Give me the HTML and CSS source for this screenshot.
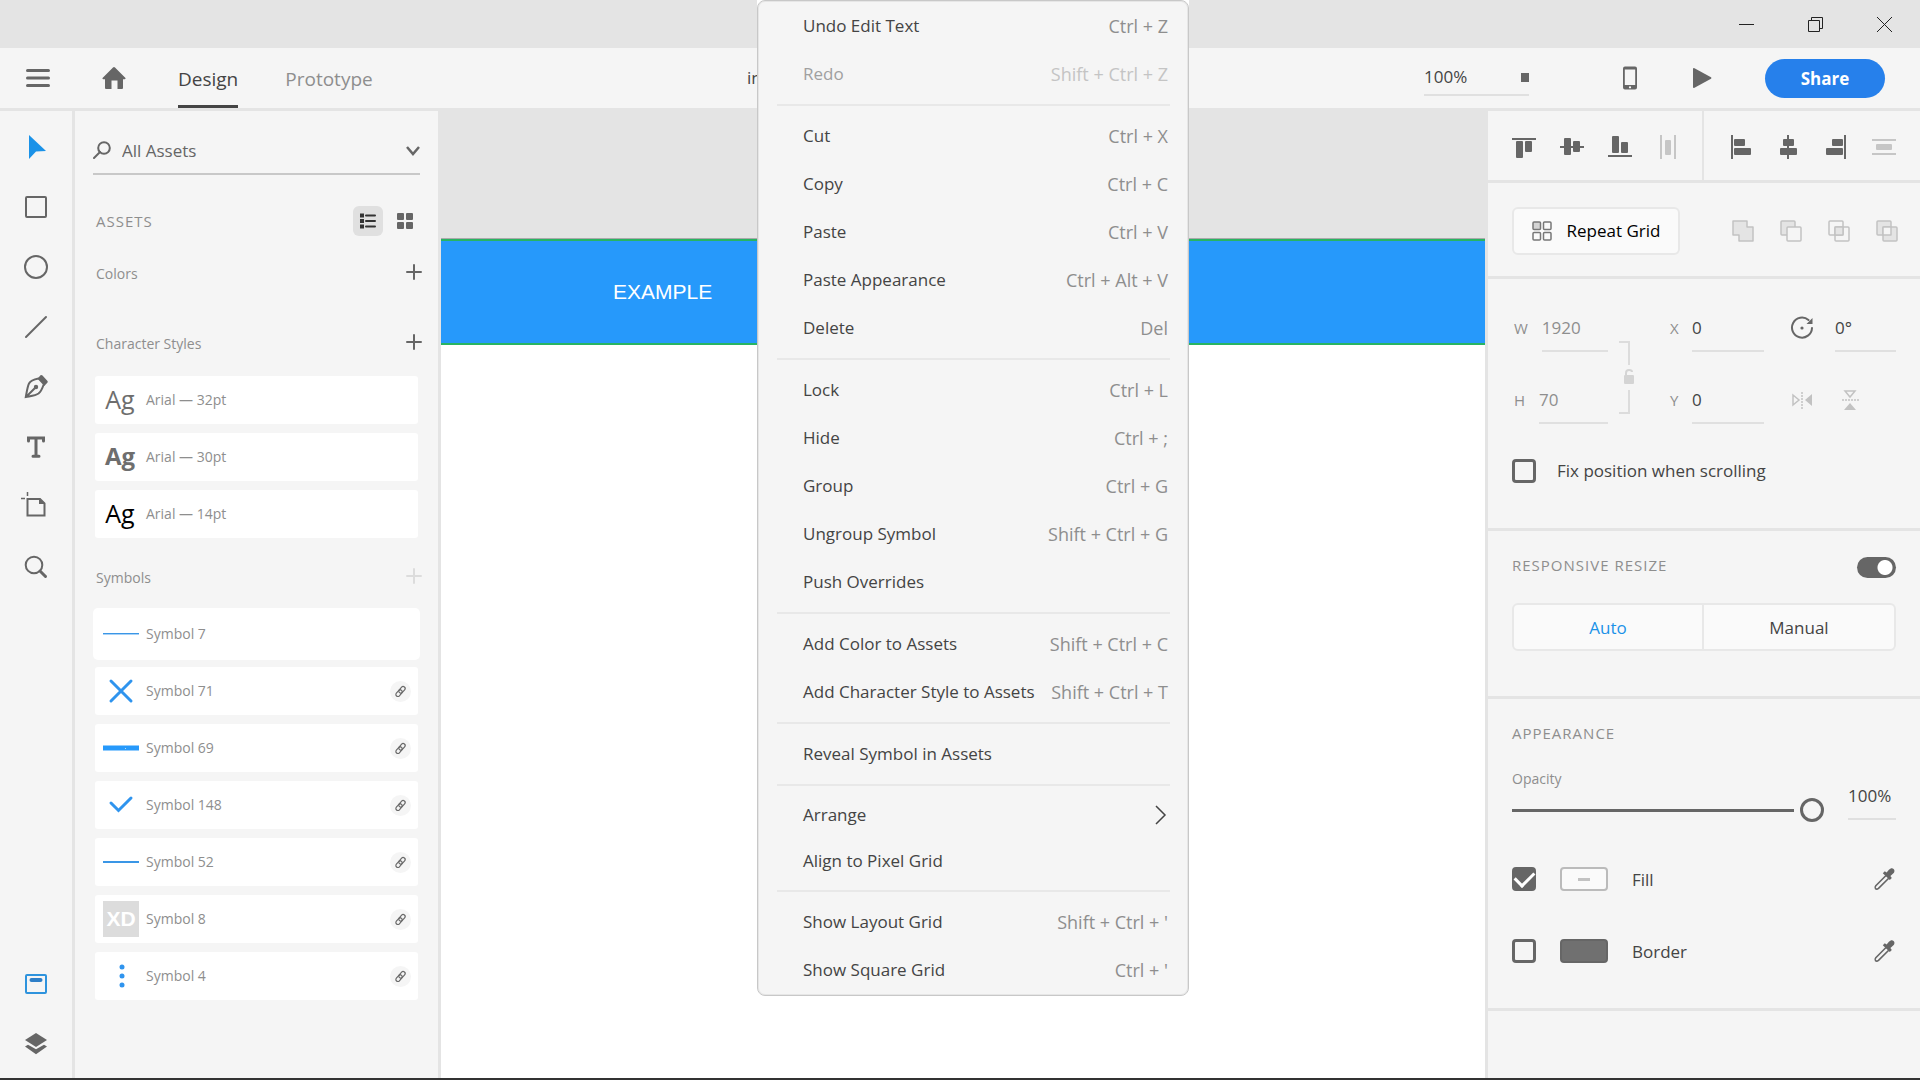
FILE: index.html
```html
<!DOCTYPE html>
<html lang="en">
<head>
<meta charset="utf-8">
<title>Design</title>
<link rel="stylesheet" href="styles.css">
</head>
<body>
<svg class="sprite" aria-hidden="true">
  <symbol id="plus" viewBox="0 0 16 16"><path d="M8 1v14M1 8h14" fill="none" stroke="currentColor" stroke-width="2" stroke-linecap="round"/></symbol>
  <symbol id="link" viewBox="0 0 21 21"><circle cx="10.500" cy="10.500" r="10.500" fill="#f5f5f5"/><g fill="none" stroke="#6a6a6a" stroke-width="1.200" transform="rotate(-49 10.500 10.500)"><rect x="4.500" y="8.500" width="7.500" height="4" rx="2"/><rect x="9" y="8.500" width="7.500" height="4" rx="2"/></g></symbol>
  <symbol id="dropper" viewBox="0 0 24 24"><path d="M14 8.500 3.800 18.700c-.8 1-1 2.200-.3 3 .8.700 2 .5 3-.3L16.700 11.200" fill="none" stroke="#666" stroke-width="1.600"/><path d="m10.800 6.300 2-2 1.800 1.300 2.300-2.800c1.600-1.900 3.600-2 4.700-.9 1.300 1.300 1.200 3.300-.7 4.900l-2.500 2.300 1.400 2-2 2z" fill="#666"/></symbol>
</svg>
<div class="app">
  <div class="titlebar">
    <button aria-label="Minimize"><svg width="15" height="15"><path d="M0 7.500h15" stroke="#222"/></svg></button>
    <button aria-label="Restore"><svg width="15" height="15" fill="none" stroke="#222"><path d="M.5 3.500h11v11H.5zM3.500 3.500v-3h11v11h-3"/></svg></button>
    <button aria-label="Close"><svg width="15" height="15"><path d="m0 0 15 15M15 0 0 15" stroke="#222"/></svg></button>
  </div>

  <header class="topbar">
    <nav class="nav">
      <button aria-label="Menu"><svg width="24" height="24"><path d="M1.500 4.500h21M1.500 12h21M1.500 19.500h21" stroke="#666" stroke-width="3" stroke-linecap="round"/></svg></button>
      <button aria-label="Home"><svg width="24" height="24"><path d="M11 1.500q1-1 2 0L23.500 12q.5 1-.8 1.200H21V22q0 1-1 1h-4.500v-8.500h-6V23H4q-1 0-1-1v-8.800H1.300Q0 13 .5 12z" fill="#666"/></svg></button>
      <a href="#" class="tab active">Design</a>
      <a href="#" class="tab">Prototype</a>
    </nav>
    <span class="doc">in</span>
    <div class="actions">
      <label class="zoom"><input value="100%" aria-label="Zoom level"><span class="handle"></span></label>
      <button aria-label="Device preview"><svg width="24" height="24"><path d="M7 .5h10q2 0 2 2v19q0 2-2 2H7q-2 0-2-2v-19q0-2 2-2zM6.800 3.500v15.500h10.400V3.500z" fill="#666" fill-rule="evenodd"/><circle cx="12" cy="21.300" r="1.100" fill="#fff"/></svg></button>
      <button aria-label="Play"><svg width="24" height="24"><path d="M3 3q0-1.500 1.500-.8L21 11.200q1 .8 0 1.600L4.500 21.800Q3 22.500 3 21z" fill="#666"/></svg></button>
      <button class="share">Share</button>
    </div>
  </header>

  <main class="workspace">
    <aside class="tools">
      <button aria-label="Select"><svg width="24" height="24"><path d="M5 0 22 16l-10 .5L5 24z" fill="#1a92e8"/></svg></button>
      <button aria-label="Rectangle"><svg width="24" height="24"><rect x="2" y="2" width="20" height="20" rx="1" class="line"/></svg></button>
      <button aria-label="Ellipse"><svg width="24" height="24"><circle cx="12" cy="12" r="11" class="line"/></svg></button>
      <button aria-label="Line"><svg width="24" height="24"><path d="M2 22 22 2" class="line"/></svg></button>
      <button aria-label="Pen"><svg width="24" height="24"><path d="M14.500 3.500C9 4.500 6 6.500 5 8.500c-1.500 3-2.200 8-3.200 13.500 5-1 10-1.500 12.700-3.500 2.500-2 4-5.500 5-8.500M2 22l9-9" class="line"/><path d="M16.500.2q1-.5 2 .3l5 5.500q.5 1 0 1.500L20.300 11 13.500 3.800z" fill="#666"/><circle cx="12" cy="12" r="2.200" fill="#666"/></svg></button>
      <button aria-label="Text"><svg width="24" height="24"><path d="M4.500 6V3h15v3M12 3v18M9 21.200h6" fill="none" stroke="#666" stroke-width="3" stroke-linecap="round"/></svg></button>
      <button aria-label="Artboard"><svg width="32" height="30"><path d="M7.500 7H20l4.500 4.500V23.500h-17z" class="line"/><path d="M7.500 0v4M1 6.500h4" stroke="#666" stroke-width="1.500"/><path d="M19 6v6h6z" fill="#666"/></svg></button>
      <button aria-label="Zoom"><svg width="24" height="24"><circle cx="10" cy="10" r="8.300" class="line"/><path d="m16 16 5.500 5.500" stroke="#666" stroke-width="3" stroke-linecap="round"/></svg></button>
      <button class="first-bottom" aria-label="Assets"><svg width="24" height="24"><rect x="2" y="3" width="20" height="18" rx="1" fill="none" stroke="#2e93dd" stroke-width="2"/><path d="M7.500 8h9" stroke="#2e7fc8" stroke-width="4" stroke-linecap="round"/></svg></button>
      <button aria-label="Layers"><svg width="24" height="24"><path d="M12 1 23 8l-11 7L1 8z" fill="#666"/><path d="m1 14.500 3-1.700 8 4.500 8-4.500 3 1.700-11 7.700z" fill="#666"/></svg></button>
    </aside>

    <aside class="assets">
      <label class="search">
        <svg width="18" height="18"><circle cx="11" cy="7" r="5.800" class="line"/><path d="m7 11-6 6" class="line"/></svg>
        <input value="All Assets" aria-label="Filter assets">
        <svg width="14" height="18"><path d="m1 6 6 7 6-7" fill="none" stroke="#666" stroke-width="2.500"/></svg>
      </label>
      <div class="assets-head">
        <h2>ASSETS</h2>
        <button class="on" aria-label="List view"><svg width="16" height="16"><path d="M0 2.500h4M0 8h4M0 13.500h4" stroke="#333" stroke-width="4"/><path d="M6 2.500h9M6 8h9M6 13.500h9" stroke="#333" stroke-width="2" stroke-linecap="round"/></svg></button>
        <button aria-label="Grid view"><svg width="16" height="16" fill="#666"><rect width="7" height="7" rx="1"/><rect x="9" width="7" height="7" rx="1"/><rect y="9" width="7" height="7" rx="1"/><rect x="9" y="9" width="7" height="7" rx="1"/></svg></button>
      </div>
      <div class="group-head colors"><h3>Colors</h3><button aria-label="Add color"><svg width="16" height="16"><use href="#plus"/></svg></button></div>
      <div class="group-head styles"><h3>Character Styles</h3><button aria-label="Add character style"><svg width="16" height="16"><use href="#plus"/></svg></button></div>
      <ul class="cards">
        <li><span class="ag">Ag</span>Arial — 32pt</li>
        <li><span class="ag bold">Ag</span>Arial — 30pt</li>
        <li><span class="ag black">Ag</span>Arial — 14pt</li>
      </ul>
      <div class="group-head symbols"><h3>Symbols</h3><button disabled aria-label="Add symbol"><svg width="16" height="16"><use href="#plus"/></svg></button></div>
      <ul class="cards">
        <li class="selected"><svg width="36" height="36"><path d="M0 17.500h36" stroke="#3a96e6"/><path d="M0 18.500h36" stroke="#a8d2f7"/></svg>Symbol 7</li>
        <li><svg width="36" height="36"><path d="m8 8 20 20M28 8 8 28" stroke="#2f94ee" stroke-width="3" stroke-linecap="round"/></svg>Symbol 71<svg class="chain" width="21" height="21"><use href="#link"/></svg></li>
        <li><svg width="36" height="36"><path d="M0 18h36" stroke="#2699fb" stroke-width="5"/><path d="M22 18.500h1" stroke="#bde"/></svg>Symbol 69<svg class="chain" width="21" height="21"><use href="#link"/></svg></li>
        <li><svg width="36" height="36"><path d="m8 16 7.500 7.500L28 11" fill="none" stroke="#2f94ee" stroke-width="3" stroke-linecap="round"/></svg>Symbol 148<svg class="chain" width="21" height="21"><use href="#link"/></svg></li>
        <li><svg width="36" height="36"><path d="M0 18h36" stroke="#3a96e6" stroke-width="2"/></svg>Symbol 52<svg class="chain" width="21" height="21"><use href="#link"/></svg></li>
        <li><span class="xd">XD</span>Symbol 8<svg class="chain" width="21" height="21"><use href="#link"/></svg></li>
        <li><svg width="36" height="36" fill="#2f94ee"><circle cx="19" cy="9" r="2.500"/><circle cx="19" cy="18" r="2.500"/><circle cx="19" cy="27" r="2.500"/></svg>Symbol 4<svg class="chain" width="21" height="21"><use href="#link"/></svg></li>
      </ul>
    </aside>

    <section class="canvas">
      <div class="artboard"><div class="banner">EXAMPLE</div></div>
    </section>

    <aside class="props">
      <div class="align">
        <div class="align-set">
          <button aria-label="Align top"><svg width="24" height="24" fill="#666"><path d="M0 3h24v2H0z"/><rect x="4" y="6" width="7" height="17" rx="1"/><rect x="13" y="6" width="7" height="11" rx="1"/></svg></button>
          <button aria-label="Align middle"><svg width="24" height="24" fill="#666"><path d="M0 11h24v2H0z"/><rect x="4" y="3" width="7" height="17" rx="1"/><rect x="13" y="6" width="7" height="11" rx="1"/></svg></button>
          <button aria-label="Align bottom"><svg width="24" height="24" fill="#666"><path d="M0 20h24v2H0z"/><rect x="4" y="1" width="7" height="17" rx="1"/><rect x="13" y="7" width="7" height="11" rx="1"/></svg></button>
          <button disabled aria-label="Distribute horizontally"><svg width="24" height="24" fill="#c6c6c6"><path d="M4 0h2v24H4zM18 0h2v24h-2z"/><rect x="9" y="5" width="6" height="15" rx="1"/></svg></button>
        </div>
        <div class="align-set">
          <button aria-label="Align left"><svg width="24" height="24" fill="#666"><path d="M3 0h2v24H3z"/><rect x="6" y="4" width="11" height="7" rx="1"/><rect x="6" y="13" width="17" height="7" rx="1"/></svg></button>
          <button aria-label="Align center"><svg width="24" height="24" fill="#666"><path d="M11 0h2v24h-2z"/><rect x="7" y="4" width="11" height="7" rx="1"/><rect x="4" y="13" width="17" height="7" rx="1"/></svg></button>
          <button aria-label="Align right"><svg width="24" height="24" fill="#666"><path d="M20 0h2v24h-2z"/><rect x="8" y="4" width="11" height="7" rx="1"/><rect x="2" y="13" width="17" height="7" rx="1"/></svg></button>
          <button disabled aria-label="Distribute vertically"><svg width="24" height="24" fill="#c6c6c6"><path d="M0 4h24v2H0zM0 18h24v2H0z"/><rect x="4" y="9" width="16" height="6" rx="1"/></svg></button>
        </div>
      </div>

      <div class="repeat">
        <button class="repeat-btn"><svg width="20" height="20" fill="none" stroke="#777" stroke-width="1.500"><rect x="1" y="1" width="7.500" height="7.500" rx="1" fill="#d4d4d4"/><rect x="11.500" y="1" width="7.500" height="7.500" rx="1"/><rect x="1" y="11.500" width="7.500" height="7.500" rx="1"/><rect x="11.500" y="11.500" width="7.500" height="7.500" rx="1"/></svg>Repeat Grid</button>
        <div class="bool">
          <button disabled aria-label="Add"><svg width="24" height="24"><path d="M2 2h14v6h6v14H8v-6H2z" class="shape tint"/></svg></button>
          <button disabled aria-label="Subtract"><svg width="24" height="24"><rect x="2" y="2" width="14" height="14" rx="1" class="shape tint"/><rect x="8" y="8" width="14" height="14" rx="1" class="shape pale"/></svg></button>
          <button disabled aria-label="Intersect"><svg width="24" height="24"><rect x="2" y="2" width="14" height="14" rx="1" class="shape"/><rect x="8" y="8" width="14" height="14" rx="1" class="shape"/><path d="M8 8h8v8H8z" class="shape tint"/></svg></button>
          <button disabled aria-label="Exclude overlap"><svg width="24" height="24"><rect x="2" y="2" width="14" height="14" rx="1" class="shape tint"/><rect x="8" y="8" width="14" height="14" rx="1" class="shape tint"/><path d="M8 8h8v8H8z" class="shape pale"/></svg></button>
        </div>
      </div>

      <div class="transform">
        <div class="geometry">
          <label class="field dim">W<input value="1920"></label>
          <svg class="lock" width="16" height="76"><path d="M0 2h10v23M10 50v23H0" fill="none" stroke="#dcdcdc" stroke-width="2"/><rect x="5" y="35" width="10" height="9" rx="1" fill="#d4d4d4"/><path d="M7 36v-3q0-3 3-3t3 2" fill="none" stroke="#d4d4d4" stroke-width="2"/></svg>
          <label class="field pos">X<input value="0"></label>
          <label class="rotate"><svg width="24" height="24"><path d="M18.500 4A10 10 0 1 0 22 12" class="line"/><path d="M22.500 2v6h-6z" fill="#666"/><circle cx="12" cy="12" r="1.600" fill="#666"/></svg><input value="0°" aria-label="Rotation"></label>
          <label class="field dim">H<input value="70"></label>
          <label class="field pos">Y<input value="0"></label>
          <div class="flips">
            <button disabled aria-label="Flip horizontally"><svg width="24" height="24"><path d="M3 7v10l6-5z" fill="none" stroke="#c2c2c2" stroke-width="1.500"/><path d="M12 4v17" stroke="#c2c2c2" stroke-width="1.500" stroke-dasharray="2 1"/><path d="M22 6v12l-7-6z" fill="#c2c2c2"/></svg></button>
            <button disabled aria-label="Flip vertically"><svg width="24" height="24"><path d="M7 3h10l-5 6z" fill="none" stroke="#c2c2c2" stroke-width="1.500"/><path d="M4 12h17" stroke="#c2c2c2" stroke-width="1.500" stroke-dasharray="2 1"/><path d="M6 22h12l-6-7z" fill="#c2c2c2"/></svg></button>
          </div>
        </div>
        <label class="fix"><input type="checkbox">Fix position when scrolling</label>
      </div>

      <div class="responsive">
        <div class="props-head"><h2>RESPONSIVE RESIZE</h2><input type="checkbox" class="switch" checked aria-label="Responsive resize"></div>
        <div class="segments"><button class="on">Auto</button><button>Manual</button></div>
      </div>

      <div class="appearance">
        <h2>APPEARANCE</h2>
        <div class="opacity">
          <div class="slider"><label for="opacity">Opacity</label><input type="range" id="opacity" value="100"></div>
          <input class="amount" value="100%" aria-label="Opacity value">
        </div>
        <div class="paint">
          <input type="checkbox" id="fill" checked><span class="swatch empty"></span><label for="fill">Fill</label>
          <button aria-label="Pick fill color"><svg width="24" height="24"><use href="#dropper"/></svg></button>
        </div>
        <div class="paint">
          <input type="checkbox" id="border"><span class="swatch"></span><label for="border">Border</label>
          <button aria-label="Pick border color"><svg width="24" height="24"><use href="#dropper"/></svg></button>
        </div>
      </div>
    </aside>
  </main>
</div>

<div class="menu-backing">
  <div class="menu" role="menu">
    <button role="menuitem">Undo Edit Text<kbd>Ctrl + Z</kbd></button>
    <button role="menuitem" disabled>Redo<kbd>Shift + Ctrl + Z</kbd></button>
    <hr>
    <button role="menuitem">Cut<kbd>Ctrl + X</kbd></button>
    <button role="menuitem">Copy<kbd>Ctrl + C</kbd></button>
    <button role="menuitem">Paste<kbd>Ctrl + V</kbd></button>
    <button role="menuitem">Paste Appearance<kbd>Ctrl + Alt + V</kbd></button>
    <button role="menuitem">Delete<kbd>Del</kbd></button>
    <hr>
    <button role="menuitem">Lock<kbd>Ctrl + L</kbd></button>
    <button role="menuitem">Hide<kbd>Ctrl + ;</kbd></button>
    <button role="menuitem">Group<kbd>Ctrl + G</kbd></button>
    <button role="menuitem">Ungroup Symbol<kbd>Shift + Ctrl + G</kbd></button>
    <button role="menuitem">Push Overrides</button>
    <hr>
    <button role="menuitem">Add Color to Assets<kbd>Shift + Ctrl + C</kbd></button>
    <button role="menuitem">Add Character Style to Assets<kbd>Shift + Ctrl + T</kbd></button>
    <hr>
    <button role="menuitem">Reveal Symbol in Assets</button>
    <hr>
    <button role="menuitem" class="short">Arrange<svg width="14" height="20"><path d="m2 1 9 9-9 9" fill="none" stroke="#444" stroke-width="1.500"/></svg></button>
    <button role="menuitem" class="short">Align to Pixel Grid</button>
    <hr>
    <button role="menuitem">Show Layout Grid<kbd>Shift + Ctrl + '</kbd></button>
    <button role="menuitem">Show Square Grid<kbd>Ctrl + '</kbd></button>
  </div>
</div>
</body>
</html>
```
FILE: styles.css
```css
* { box-sizing: border-box; }

:root {
  --panel: #f5f5f5;
  --rule: #e4e4e4;
  --ink: #444;
  --muted: #8e8e8e;
  --icon: #666;
}

body {
  margin: 0;
  font-family: "Open Sans", "Noto Sans", sans-serif;
  font-size: 17px;
  line-height: 24px;
  color: var(--ink);
}

button, input {
  margin: 0;
  padding: 0;
  border: 0;
  border-radius: 0;
  background: none;
  font: inherit;
  color: inherit;
}

svg { display: block; flex: none; }
h2, h3 { margin: 0; font-weight: 400; color: var(--muted); }
h2 { font-size: 15px; line-height: 20px; letter-spacing: 1px; }
h3 { font-size: 14px; line-height: 20px; }
ul { margin: 0; padding: 0; list-style: none; }

.sprite { position: absolute; width: 0; height: 0; }
.line { fill: none; stroke: var(--icon); stroke-width: 2; stroke-linecap: round; }

.app {
  display: flex;
  flex-direction: column;
  min-height: 100vh;
  border-bottom: 2px solid #333;
}

/* Window bar */
.titlebar { display: flex; justify-content: flex-end; height: 48px; padding-right: 1px; background: var(--rule); }
.titlebar button { display: flex; justify-content: center; align-items: center; width: 69px; }

/* Top bar */
.topbar {
  display: grid;
  grid-template-columns: 747px 1fr auto;
  align-items: center;
  height: 63px;
  border-bottom: 3px solid var(--rule);
  background: var(--panel);
}
.nav { display: flex; align-items: center; gap: 52px; padding-left: 26px; height: 60px; }
.tab {
  display: flex;
  align-items: center;
  height: 60px;
  padding-top: 5px;
  border-bottom: 3px solid transparent;
  color: var(--muted);
  font-size: 19px;
  text-decoration: none;
}
.tab.active { color: var(--ink); border-color: var(--ink); }
.tab + .tab { margin-left: -5px; }
.actions { display: flex; align-items: center; padding-right: 35px; gap: 48px; }
.zoom {
  display: flex;
  align-items: center;
  width: 105px;
  height: 36px;
  margin-right: 41px;
  border-bottom: 2px solid #e0e0e0;
}
.zoom input { flex: 1; min-width: 0; }
.handle { width: 8px; height: 9px; background: var(--icon); }
.share {
  width: 120px;
  height: 39px;
  margin-left: 3px;
  padding-top: 2px;
  border-radius: 20px;
  background: #2680eb;
  color: #fff;
  font-weight: 700;
}

/* Workspace */
.workspace { flex: 1; display: grid; grid-template-columns: 75px 366px 1fr 435px; }

.tools {
  display: flex;
  flex-direction: column;
  padding: 6px 0 4px;
  border-right: 3px solid var(--rule);
  background: var(--panel);
}
.tools button { display: flex; justify-content: center; align-items: center; height: 60px; }
.tools .first-bottom { margin-top: auto; }

/* Assets */
.assets { padding: 16px 18px 0; border-right: 3px solid var(--rule); background: var(--panel); }
.search {
  display: flex;
  align-items: center;
  gap: 11px;
  height: 48px;
  border-bottom: 2px solid #c8c8c8;
  color: var(--icon);
}
.search input { flex: 1; min-width: 0; padding-top: 2px; }
.assets-head { display: flex; align-items: center; gap: 7px; margin-top: 31px; padding-left: 3px; }
.assets-head h2 { flex: 1; }
.assets-head button {
  display: flex;
  justify-content: center;
  align-items: center;
  width: 30px;
  height: 30px;
  border-radius: 6px;
}
.assets-head .on { background: #e0e0e0; }
.group-head {
  display: flex;
  justify-content: space-between;
  align-items: flex-start;
  height: 20px;
  padding-left: 3px;
  color: var(--icon);
}
.group-head button { margin-right: -2px; }
.group-head button:disabled { color: #dcdcdc; }
.colors { margin-top: 28px; }
.styles { margin-top: 50px; }
.symbols { margin-top: 30px; }
.cards { display: flex; flex-direction: column; gap: 9px; padding: 22px 2px 0; }
.cards li {
  display: flex;
  align-items: center;
  gap: 7px;
  height: 48px;
  padding: 0 7px 0 8px;
  border-radius: 3px;
  background: #fff;
  color: var(--muted);
  font-size: 14px;
}
.cards .selected { box-shadow: 0 0 0 2px #fff; }
.chain { margin-left: auto; }
.ag { width: 36px; padding: 0 2px 2px 0; text-align: center; font-size: 25px; color: #6e6e6e; }
.bold { font-weight: 700; font-size: 24px; }
.black { color: #000; }
.xd {
  width: 36px;
  background: #dcdcdc;
  color: #fff;
  font: 700 21px/36px "Liberation Sans", sans-serif;
  text-align: center;
}

/* Canvas */
.canvas { display: flex; padding-top: 127px; background: var(--rule); }
.artboard { flex: 1; border-top: 1px solid #aaa; background: #fff; }
.banner {
  display: flex;
  align-items: center;
  height: 106px;
  padding-left: 172px;
  border: solid #28b463;
  border-width: 2px 0;
  background: #2699fb;
  color: #fff;
  font: 21px "Liberation Sans", sans-serif;
}

/* Properties */
.props { border-left: 3px solid var(--rule); background: var(--panel); }
.props > div { border-bottom: 3px solid var(--rule); }
.align { display: grid; grid-template-columns: 1fr 1fr; height: 72px; }
.align-set { display: flex; align-items: center; gap: 24px; padding: 2px 0 0 24px; }
.align-set:first-child { border-right: 2px solid var(--rule); }
.repeat { display: flex; justify-content: space-between; align-items: center; padding: 24px 21px 21px 24px; }
.repeat-btn {
  display: flex;
  align-items: center;
  justify-content: center;
  gap: 15px;
  width: 168px;
  height: 48px;
  border: 2px solid #e8e8e8;
  border-radius: 6px;
  background: #fafafa;
  color: #000;
}
.bool { display: flex; gap: 24px; }
.shape { fill: none; stroke: #c2c2c2; stroke-width: 1.5; stroke-linejoin: round; }
.tint { fill: #e4e4e4; }
.pale { fill: #f5f5f5; }

.transform { padding: 25px 24px 45px; }
.geometry { display: grid; grid-template-columns: 96px 60px 96px 1fr; grid-template-rows: 48px 48px; row-gap: 24px; }
.field { display: flex; align-items: center; color: var(--muted); font-size: 15px; padding-left: 2px; }
.field input, .rotate input {
  flex: 1;
  min-width: 0;
  height: 48px;
  border-bottom: 2px solid #e0e0e0;
  font-size: 17px;
}
.dim { gap: 14px; }
.dim input { color: var(--muted); }
.pos { display: grid; grid-template-columns: 22px 72px; }
.pos input, .rotate input { color: var(--ink); }
.lock { grid-row: span 2; align-self: end; margin: 0 0 8px 11px; }
.rotate { display: flex; align-items: center; gap: 21px; min-width: 0; padding-left: 26px; }
.flips { display: flex; align-items: center; gap: 24px; padding-left: 26px; }
.fix { display: flex; align-items: center; gap: 21px; margin-top: 35px; }

input[type="checkbox"] {
  appearance: none;
  flex: none;
  width: 24px;
  height: 24px;
  border: 3px solid var(--icon);
  border-radius: 4px;
}
#fill:checked { display: grid; place-items: center; background: var(--icon); }
#fill:checked::before {
  content: "";
  width: 16px;
  height: 9px;
  margin-bottom: 4px;
  border: solid #fff;
  border-width: 0 0 3px 3px;
  transform: rotate(-45deg);
}

.responsive { padding: 24px 24px 45px; }
.props-head { display: flex; justify-content: space-between; align-items: flex-start; height: 48px; }
input.switch {
  width: 39px;
  height: 21px;
  margin-top: 2px;
  border: 0;
  border-radius: 11px;
  background: radial-gradient(circle at 28px center, #fff 7px, var(--icon) 8px);
}
.segments { display: grid; grid-template-columns: 1fr 1fr; height: 48px; border: 2px solid #e8e8e8; border-radius: 6px; background: #fafafa; }
.segments button { padding-top: 2px; }
.segments .on { color: #1a92e8; border-right: 2px solid #e8e8e8; }

.appearance { display: flex; flex-direction: column; padding: 24px 24px 45px; }
.opacity { display: grid; grid-template-columns: 1fr 48px; gap: 24px; margin: 26px 0 -3px; }
.slider label { display: block; color: var(--muted); font-size: 14px; line-height: 20px; }
.slider input {
  appearance: none;
  display: block;
  width: 100%;
  height: 24px;
  margin-top: 9px;
  background: linear-gradient(var(--icon), var(--icon)) left center / calc(100% - 30px) 3px no-repeat;
}
.slider input::-webkit-slider-thumb {
  appearance: none;
  width: 24px;
  height: 24px;
  border: 3px solid var(--icon);
  border-radius: 50%;
  background: var(--panel);
}
.amount { width: 48px; height: 48px; margin-top: 3px; border-bottom: 2px solid #e0e0e0; }
.paint { display: flex; align-items: center; gap: 24px; height: 24px; margin-top: 48px; }
.paint label { flex: 1; padding-top: 2px; }
.swatch { width: 48px; height: 24px; border: 2px solid #666; border-radius: 4px; background: #707070; }
.empty { border-color: #bbb; background: linear-gradient(#c2c2c2, #c2c2c2) center / 12px 3px no-repeat #fafafa; }

/* Context menu */
.menu-backing { position: absolute; top: 0; left: 757px; width: 432px; background: #fff; }
.menu {
  padding: 1px 18px 1px 19px;
  border: 1px solid #c8c8c8;
  border-radius: 8px;
  background: var(--panel);
  box-shadow: inset 0 0 0 1px #e6e6e6;
}
.menu button {
  display: flex;
  justify-content: space-between;
  align-items: center;
  width: 100%;
  height: 48px;
  padding: 0 2px 0 26px;
}
.menu .short { height: 46px; }
.menu kbd { font-family: inherit; font-size: 18px; color: var(--muted); }
.menu button:disabled { color: #a0a0a0; }
.menu button:disabled kbd { color: #c4c4c4; }
.menu hr { margin: 6px 0; border: 0; border-top: 2px solid #e8e8e8; }
```
